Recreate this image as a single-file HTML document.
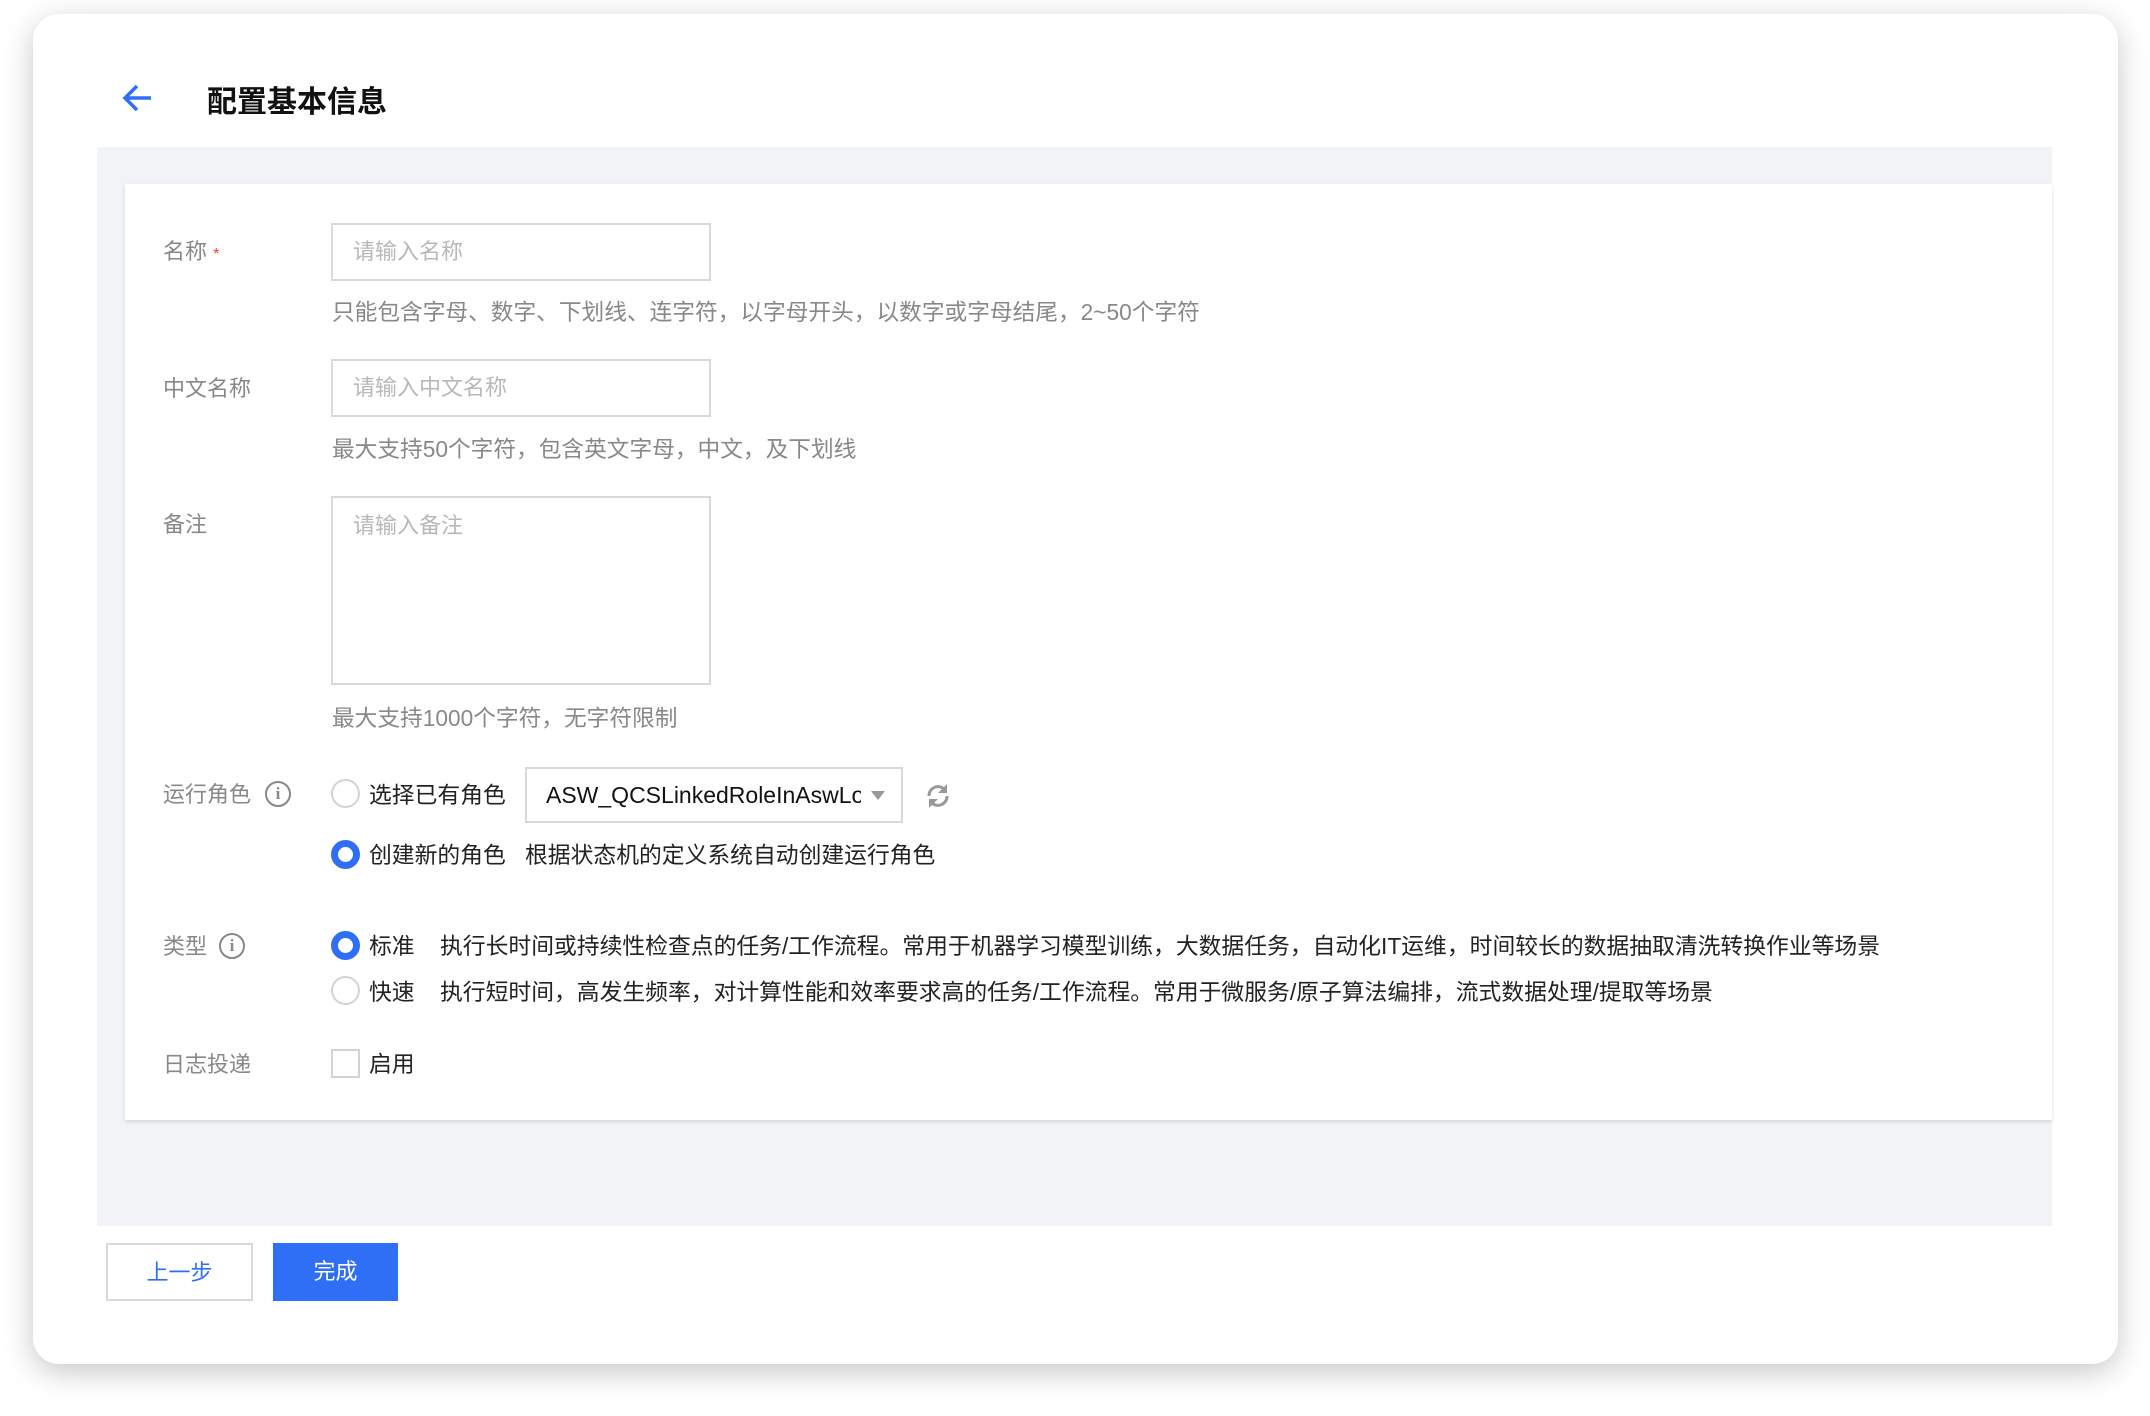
<!DOCTYPE html>
<html><head><meta charset="utf-8"><style>
*{box-sizing:border-box;margin:0;padding:0}
body{width:2150px;height:1416px;background:#fff;font-family:"Liberation Sans","Noto Sans CJK SC",sans-serif;position:relative;overflow:hidden;color:#333}
.card{position:absolute;left:33px;top:14px;width:2085px;height:1350px;background:#fff;border-radius:26px;box-shadow:0 8px 30px rgba(0,0,0,.22)}
.a{position:absolute;white-space:nowrap}
.gray{position:absolute;left:97px;top:147px;width:1955px;height:1079px;background:#f2f3f7}
.panel{position:absolute;left:125px;top:184px;width:1927px;height:936px;background:#fff;box-shadow:0 2px 4px rgba(0,0,0,.12)}
.lbl{color:#888;font-size:22px}
.hint{color:#888;font-size:22.7px}
.inp{position:absolute;border:2px solid #d5d9e0;background:#fff;color:#b8b8b8;font-size:22px;padding-left:20px}
.txt{font-size:22.8px;color:#222}
.radio{position:absolute;width:29px;height:29px;border-radius:50%;border:2px solid #d0d4da;background:#fff}
.radio.on{border:7px solid #2f6ff6}
.info{position:absolute;width:26px;height:26px;border:2px solid #888;border-radius:50%;color:#888;font-size:17px;font-weight:bold;text-align:center;line-height:22px;font-family:"Liberation Serif",serif}
</style></head><body>
<div class="card"></div>
<svg class="a" style="left:122px;top:83px" width="32" height="30" viewBox="0 0 32 30"><path d="M29 15H4M15 3L3 15l12 12" stroke="#2f6ff6" stroke-width="3.5" fill="none"/></svg>
<div class="a" style="left:207px;top:77px;font-size:30px;font-weight:bold;color:#111">配置基本信息</div>
<div class="gray"></div>
<div class="panel"></div>

<div class="a lbl" style="left:163px;top:234px">名称 <span style="color:#e54545;font-size:16px">*</span></div>
<div class="inp" style="left:331px;top:223px;width:380px;height:58px;line-height:54px">请输入名称</div>
<div class="a hint" style="left:332px;top:294px">只能包含字母、数字、下划线、连字符，以字母开头，以数字或字母结尾，2~50个字符</div>

<div class="a lbl" style="left:163px;top:371px">中文名称</div>
<div class="inp" style="left:331px;top:359px;width:380px;height:58px;line-height:54px">请输入中文名称</div>
<div class="a hint" style="left:332px;top:431px">最大支持50个字符，包含英文字母，中文，及下划线</div>

<div class="a lbl" style="left:163px;top:507px">备注</div>
<div class="inp" style="left:331px;top:496px;width:380px;height:189px;padding-top:10px">请输入备注</div>
<div class="a hint" style="left:332px;top:700px">最大支持1000个字符，无字符限制</div>

<div class="a lbl" style="left:163px;top:777px">运行角色</div>
<div class="info" style="left:265px;top:781px">i</div>
<div class="radio" style="left:331px;top:779px"></div>
<div class="a txt" style="left:369px;top:777px">选择已有角色</div>
<div class="inp" style="left:525px;top:767px;width:378px;height:56px;line-height:52px;color:#111;font-size:23px;padding-left:19px;overflow:hidden">ASW_QCSLinkedRoleInAswLog<span style="position:absolute;right:0;top:0;width:40px;height:52px;background:#fff"></span><span style="position:absolute;right:16px;top:22px;border-left:7px solid transparent;border-right:7px solid transparent;border-top:9px solid #999"></span></div>
<svg class="a" style="left:925px;top:782px" width="26" height="28" viewBox="0 0 26 28"><path d="M20 8A9 9 0 0 0 4 14" stroke="#999" stroke-width="3" fill="none"/><path d="M22 2v9h-9z" fill="#999"/><path d="M6 20a9 9 0 0 0 16-6" stroke="#999" stroke-width="3" fill="none"/><path d="M4 26v-9h9z" fill="#999"/></svg>
<div class="radio on" style="left:331px;top:840px"></div>
<div class="a txt" style="left:369px;top:837px">创建新的角色</div>
<div class="a txt" style="left:525px;top:837px">根据状态机的定义系统自动创建运行角色</div>

<div class="a lbl" style="left:163px;top:929px">类型</div>
<div class="info" style="left:219px;top:933px">i</div>
<div class="radio on" style="left:331px;top:931px"></div>
<div class="a txt" style="left:369px;top:928px">标准</div>
<div class="a txt" style="left:440px;top:928px">执行长时间或持续性检查点的任务/工作流程。常用于机器学习模型训练，大数据任务，自动化IT运维，时间较长的数据抽取清洗转换作业等场景</div>
<div class="radio" style="left:331px;top:976px"></div>
<div class="a txt" style="left:369px;top:974px">快速</div>
<div class="a txt" style="left:440px;top:974px">执行短时间，高发生频率，对计算性能和效率要求高的任务/工作流程。常用于微服务/原子算法编排，流式数据处理/提取等场景</div>

<div class="a lbl" style="left:163px;top:1047px">日志投递</div>
<div class="a" style="left:331px;top:1049px;width:29px;height:29px;border:2px solid #d0d4da;background:#fff"></div>
<div class="a txt" style="left:369px;top:1046px">启用</div>

<div class="a" style="left:106px;top:1243px;width:147px;height:58px;border:2px solid #d5d9e0;background:#fff;color:#2f6ff6;font-size:22px;text-align:center;line-height:56px">上一步</div>
<div class="a" style="left:273px;top:1243px;width:125px;height:58px;background:#2f6ff6;color:#fff;font-size:22px;text-align:center;line-height:58px">完成</div>
</body></html>
